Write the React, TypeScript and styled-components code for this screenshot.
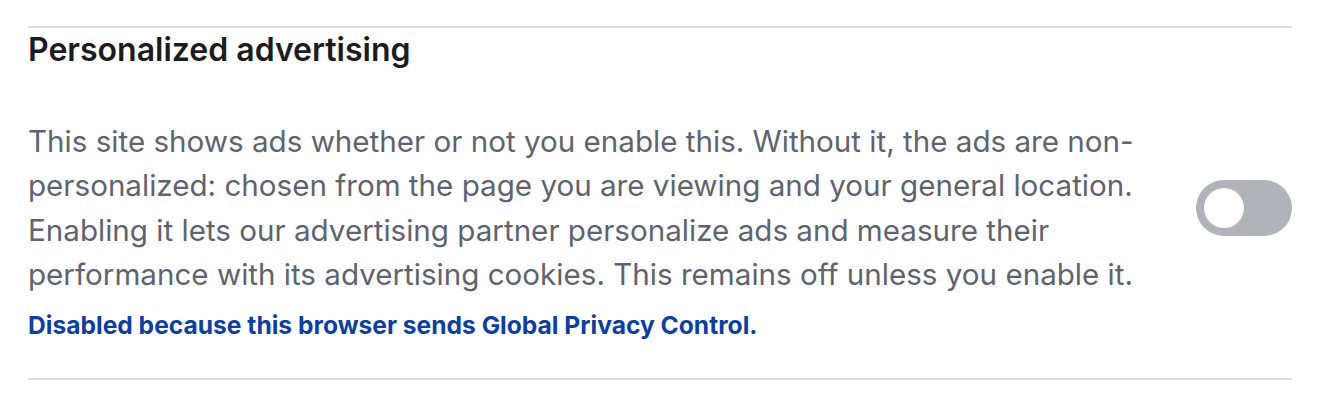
import React from "react";
import styled, { createGlobalStyle } from "styled-components";

const GlobalStyle = createGlobalStyle`
  html, body {
    margin: 0;
    padding: 0;
    background: #ffffff;
  }
  body {
    font-family: Inter, "Noto Sans", "Liberation Sans", sans-serif;
  }
`;

const Page = styled.div`
  padding: 26px 28px 0;
`;

const Section = styled.section`
  border-top: 2px solid #dcdde1;
  border-bottom: 2px solid #dcdde1;
  padding: 2px 0 34px;
`;

const Heading = styled.h2`
  margin: 0;
  font-size: 32px;
  line-height: 40px;
  font-weight: 600;
  color: #1b1c1f;
`;

const Row = styled.div`
  display: flex;
  align-items: center;
  gap: 48px;
  margin-top: 49px;
`;

const Body = styled.p`
  margin: 0;
  flex: 1;
  font-size: 29.6px;
  line-height: 44.4px;
  font-weight: 400;
  color: #5d6370;
`;

const Note = styled.p`
  margin: 10px 0 0;
  font-size: 24.6px;
  line-height: 37px;
  font-weight: 700;
  color: #0d3f9e;
`;

const Track = styled.button<{ $on: boolean }>`
  flex: none;
  position: relative;
  width: 96px;
  height: 56px;
  border: 0;
  padding: 0;
  border-radius: 28px;
  background: ${(p) => (p.$on ? "#0d3f9e" : "#b0b3b8")};
  cursor: not-allowed;
`;

const Knob = styled.span<{ $on: boolean }>`
  position: absolute;
  top: 8px;
  left: ${(p) => (p.$on ? "48px" : "8px")};
  width: 40px;
  height: 40px;
  border-radius: 50%;
  background: #ffffff;
`;

export default function App() {
  const on = false;
  return (
    <>
      <GlobalStyle />
      <Page>
        <Section>
          <Heading>Personalized advertising</Heading>
          <Row>
            <Body>
              This site shows ads whether or not you enable this. Without it, the ads are non-personalized: chosen from the page you are viewing and your general location. Enabling it lets our advertising partner personalize ads and measure their performance with its advertising cookies. This remains off unless you enable it.
            </Body>
            <Track $on={on} role="switch" aria-checked={on} aria-label="Personalized advertising" disabled>
              <Knob $on={on} />
            </Track>
          </Row>
          <Note>Disabled because this browser sends Global Privacy Control.</Note>
        </Section>
      </Page>
    </>
  );
}
